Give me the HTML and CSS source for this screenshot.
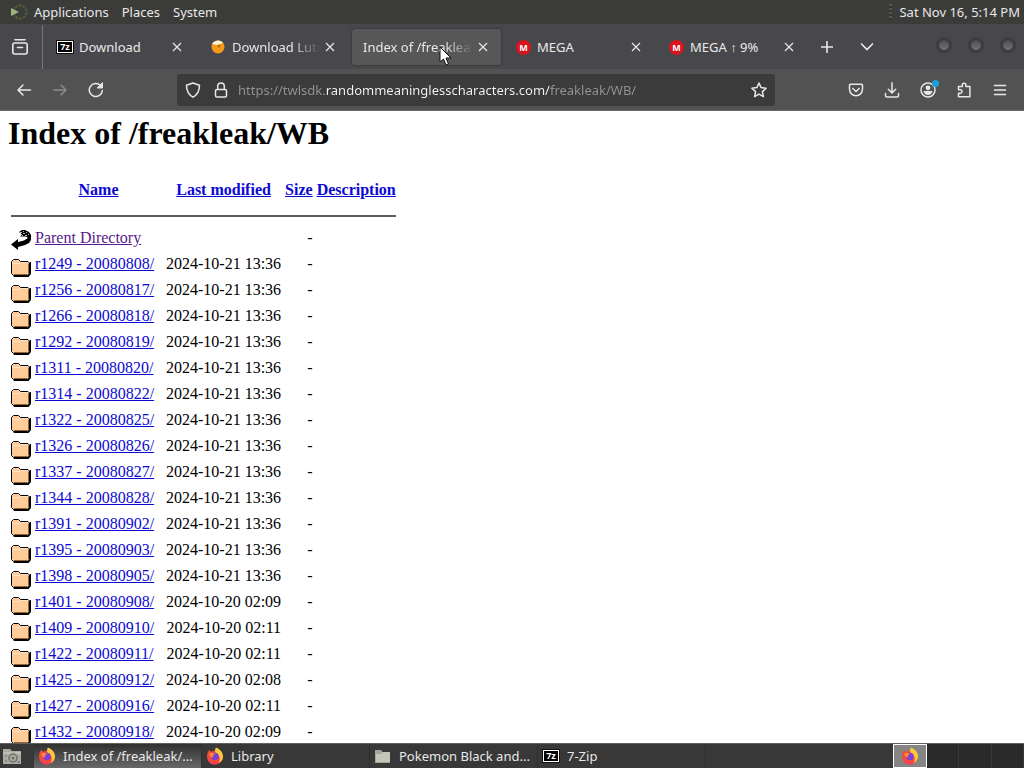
FILE: index.html
```html
<!DOCTYPE html>
<html lang="en">
<head>
  <meta charset="UTF-8">
  <meta name="viewport" content="width=device-width, initial-scale=1.0">
  <title>Index of /freakleak/WB</title>
  <link rel="stylesheet" href="styles.css">
</head>
<body>

  <!-- Shared icons -->
  <svg class="sprite" aria-hidden="true">
    <symbol id="close" viewBox="0 0 10 10"><path d="M1 1l8 8M9 1L1 9" fill="none" stroke="currentColor" stroke-width="1.2"/></symbol>
    <symbol id="firefox" viewBox="0 0 18 18">
      <path d="M1 9.500C1 6 2.600 4 3.500 2.800L5 5c1.500-1 3-1 3.500-.8L10 1c1 2.500 5 2.500 6.600 7.500C18 13 14 17.500 9 17.500S1 14 1 9.500z" fill="#f5493c"/>
      <path d="M10 .5c4 1.500 7 5 7 9 0 3-2 5.500-4 6.500 1.500-4 1-8-3-10-1.500-1.500-1-4 0-5.500z" fill="#ffc93a"/>
      <path d="M2 12c2 4 7 5 11 2.500-1 2-3 3-5 3-3 0-5.500-2.500-6-5.500z" fill="#fb3a63"/>
      <circle cx="9" cy="9.500" r="3.800" fill="#7d3fd8"/>
      <path d="M3.500 6.500C5 5 8 6 9 7.500 7 7.500 6.500 9 7 10.500c-2.500-.5-4-2-3.500-4z" fill="#ff8b35"/>
    </symbol>
    <symbol id="folder" viewBox="0 0 20 22">
      <path d="M2 20.500h14.500l2.500-2.500V7h1v12l-2.500 3H3z" fill="#000"/>
      <path d="M.5 6.500l2-2h5l2 2h7.500l1.500 1.500V18l-2 2.500H2.500l-2-2z" fill="#fc9" stroke="#000"/>
      <path d="M17.500 8.500V18M3 19.500h13.500" fill="none" stroke="#966432"/>
      <path d="M1 8.500h8l1-1h7" fill="none" stroke="#ffe5c8"/>
    </symbol>
    <symbol id="back" viewBox="0 0 20 22">
      <path d="M8 3l3-2h3l4 2 2 3v5l-2 3-4 2-7 2v3l-7-5.500L7 10v3l6-1.500 4-2.500-2-1.500H9l2-2z" fill="#000"/>
      <path d="M9 3.500h2M12 2.500h1M12 4.500h2M15 3.500h1M14 6.500h2M17 5.500h1M11 6.500h1" stroke="#bbb"/>
    </symbol>
  </svg>

  <!-- Top desktop panel -->
  <header class="panel">
    <svg class="menu-logo" width="18" height="18" viewBox="0 0 18 18">
      <circle cx="10" cy="9" r="6.500" fill="none" stroke="#4b5f38" stroke-width="2" stroke-dasharray="3 1"/>
      <path d="M1 5l8 4-8 4z" fill="#9bb47e"/>
    </svg>
    <nav class="panel-menu">
      <button>Applications</button>
      <button>Places</button>
      <button>System</button>
    </nav>
    <span class="grip"></span>
    <time class="clock">Sat Nov 16, 5:14 PM</time>
  </header>

  <!-- Browser tabs -->
  <div class="tab-bar">
    <button class="firefox-view" aria-label="Firefox View">
      <svg width="18" height="18" viewBox="0 0 18 18" fill="none" stroke="currentColor" stroke-width="1.600" stroke-linecap="round">
        <path d="M4 1.800h10"/><rect x="1.800" y="5" width="14.400" height="11" rx="2"/><path d="M6.500 9.500h5"/>
      </svg>
    </button>
    <div class="tabs">
      <div class="tab">
        <span class="zip-icon">7z</span>
        <span class="tab-label">Download</span>
        <button class="tab-close" aria-label="Close tab"><svg width="10" height="10"><use href="#close"/></svg></button>
      </div>
      <div class="tab">
        <svg class="favicon" width="14" height="14" viewBox="0 0 14 14">
          <circle cx="7" cy="7" r="6.500" fill="#f59a1b"/>
          <path d="M1 4C3 0 10-1 12.500 3.500 10 2.500 9 5 6 5 4 5 3 4 1 4z" fill="#fff0d0"/>
          <circle cx="8" cy="6" r="1.500" fill="#c96c08"/>
        </svg>
        <span class="tab-label faded">Download Lutris</span>
        <button class="tab-close" aria-label="Close tab"><svg width="10" height="10"><use href="#close"/></svg></button>
      </div>
      <div class="tab selected">
        <span class="tab-label faded">Index of /freakleak/WB</span>
        <button class="tab-close" aria-label="Close tab"><svg width="10" height="10"><use href="#close"/></svg></button>
        <svg class="pointer" width="13" height="20" viewBox="0 0 13 20">
          <path d="M1 1v15l3.500-3 2.500 6 2.500-1-2.500-6h5z" fill="#fff" stroke="#111"/>
        </svg>
      </div>
      <div class="tab">
        <span class="mega-icon">M</span>
        <span class="tab-label">MEGA</span>
        <button class="tab-close" aria-label="Close tab"><svg width="10" height="10"><use href="#close"/></svg></button>
      </div>
      <div class="tab">
        <span class="mega-icon">M</span>
        <span class="tab-label">MEGA ↑ 9%</span>
        <button class="tab-close" aria-label="Close tab"><svg width="10" height="10"><use href="#close"/></svg></button>
      </div>
    </div>
    <button class="tab-tool" aria-label="New tab">
      <svg width="14" height="14" viewBox="0 0 14 14" fill="none" stroke="currentColor" stroke-width="1.600"><path d="M7 1v12M1 7h12"/></svg>
    </button>
    <button class="tab-tool" aria-label="List all tabs">
      <svg width="14" height="14" viewBox="0 0 14 14" fill="none" stroke="currentColor" stroke-width="1.700" stroke-linecap="round"><path d="M1.500 4L7 9.500 12.500 4"/></svg>
    </button>
    <div class="window-buttons">
      <button aria-label="Minimize"></button>
      <button aria-label="Maximize"></button>
      <button aria-label="Close"></button>
    </div>
  </div>

  <!-- Navigation toolbar -->
  <div class="toolbar">
    <button aria-label="Back">
      <svg width="16" height="16" viewBox="0 0 16 16"><path d="M14.500 8H2M7 3L2 8l5 5"/></svg>
    </button>
    <button aria-label="Forward" disabled>
      <svg width="16" height="16" viewBox="0 0 16 16"><path d="M1.500 8h12.500M9 3l5 5-5 5"/></svg>
    </button>
    <button aria-label="Reload">
      <svg width="16" height="16" viewBox="0 0 16 16"><path d="M14.300 8.500A6.500 6.500 0 1 1 12.500 3.500l1 1"/><path d="M14.500 1v5h-5z" fill="currentColor" stroke-width="1"/></svg>
    </button>
    <div class="url-bar">
      <svg width="16" height="16" viewBox="0 0 16 16"><path d="M8 1l6.500 2.300C14.500 9 12 13 8 15.200 4 13 1.500 9 1.500 3.300z"/></svg>
      <svg width="16" height="16" viewBox="0 0 16 16"><rect x="2.500" y="7.500" width="11" height="7.500" rx="1.500"/><path d="M4.700 7V4.300a3.300 3.300 0 0 1 6.600 0V7"/></svg>
      <input type="text" aria-label="Address" value="https://twlsdk.randommeaninglesscharacters.com/freakleak/WB/">
      <button aria-label="Bookmark this page">
        <svg width="16" height="16" viewBox="0 0 16 16"><path d="M8 1l2.100 4.600 5 .6-3.700 3.400 1 5L8 12.100l-4.400 2.500 1-5L.9 6.200l5-.6z"/></svg>
      </button>
    </div>
    <button aria-label="Save to Pocket">
      <svg width="16" height="16" viewBox="0 0 16 16"><path d="M2.500 2.300h11a1 1 0 0 1 1 1v4a6.500 6.500 0 0 1-13 0v-4a1 1 0 0 1 1-1zM4.800 6.500L8 9.500l3.200-3"/></svg>
    </button>
    <button aria-label="Downloads">
      <svg width="16" height="16" viewBox="0 0 16 16"><path d="M8 .8v10M4.300 7.300L8 11l3.700-3.700M1.500 11.500v2a1.500 1.500 0 0 0 1.500 1.500h10a1.500 1.500 0 0 0 1.500-1.500v-2"/></svg>
    </button>
    <button class="account" aria-label="Account">
      <svg width="16" height="16" viewBox="0 0 16 16"><circle cx="8" cy="8" r="7"/><circle cx="8" cy="5.800" r="2.400" fill="currentColor" stroke="none"/><path d="M3.500 9h9c-.5 2.500-2.300 4-4.500 4s-4-1.500-4.500-4z" fill="currentColor" stroke="none"/></svg>
      <span class="account-dot"></span>
    </button>
    <button aria-label="Extensions">
      <svg width="16" height="16" viewBox="0 0 16 16"><path d="M2.500 14.800v-3.600h1.800a1.700 1.700 0 0 0 0-3.400H2.500V4.500h3.800V3a1.800 1.800 0 0 1 3.600 0v1.500h4v10.300z"/></svg>
    </button>
    <button aria-label="Menu">
      <svg width="14" height="14" viewBox="0 0 14 14"><path d="M1.500 2.500h11M1.500 7h11M1.500 11.500h11"/></svg>
    </button>
  </div>

  <!-- Directory listing -->
  <main class="page">
    <h1>Index of /freakleak/WB</h1>
    <table>
      <thead>
        <tr>
          <th class="icon-col"></th>
          <th class="name-col"><a href="#">Name</a></th>
          <th><a href="#">Last modified</a></th>
          <th><a href="#">Size</a></th>
          <th><a href="#">Description</a></th>
        </tr>
        <tr><th colspan="5"><hr></th></tr>
      </thead>
      <tbody id="listing">
        <tr>
          <td><svg width="20" height="22"><use href="#back"/></svg></td>
          <td><a class="visited" href="#">Parent Directory</a></td>
          <td></td>
          <td class="right">-</td>
          <td></td>
        </tr>
      </tbody>
    </table>
  </main>

  <!-- Bottom desktop panel -->
  <footer class="taskbar">
    <button class="show-files" aria-label="Files">
      <svg width="20" height="18" viewBox="0 0 20 18">
        <path d="M1 2h7l2 2h9v13H1z" fill="#a9aca0"/><path d="M1 6h18" stroke="#d0d2c8"/>
        <circle cx="11" cy="11" r="4" fill="none" stroke="#6d7168" stroke-width="1.500"/><circle cx="11" cy="11" r="1.500" fill="#6d7168"/><path d="M3 9h2M3 14h2M15 15h3" stroke="#6d7168"/>
      </svg>
    </button>
    <div class="tasks">
      <button class="task active"><svg width="18" height="18"><use href="#firefox"/></svg><span>Index of /freakleak/...</span></button>
      <button class="task"><svg width="18" height="18"><use href="#firefox"/></svg><span>Library</span></button>
      <button class="task">
        <svg width="18" height="18" viewBox="0 0 18 18"><path d="M1 3h6l1.500 2H16v11H1z" fill="#a3a698"/><path d="M2 7h5l2-2h7v10H2z" fill="#c4c6ba"/></svg>
        <span>Pokemon Black and...</span>
      </button>
      <button class="task"><span class="zip-icon">7z</span><span>7-Zip</span></button>
    </div>
    <div class="workspaces">
      <button class="current" aria-label="Workspace 1"><svg width="18" height="18"><use href="#firefox"/></svg></button>
      <button aria-label="Workspace 2"></button>
      <button aria-label="Workspace 3"></button>
      <button aria-label="Workspace 4"></button>
    </div>
  </footer>

  <script>
    const folders = [
      ["r1249 - 20080808/", "2024-10-21 13:36"],
      ["r1256 - 20080817/", "2024-10-21 13:36"],
      ["r1266 - 20080818/", "2024-10-21 13:36"],
      ["r1292 - 20080819/", "2024-10-21 13:36"],
      ["r1311 - 20080820/", "2024-10-21 13:36"],
      ["r1314 - 20080822/", "2024-10-21 13:36"],
      ["r1322 - 20080825/", "2024-10-21 13:36"],
      ["r1326 - 20080826/", "2024-10-21 13:36"],
      ["r1337 - 20080827/", "2024-10-21 13:36"],
      ["r1344 - 20080828/", "2024-10-21 13:36"],
      ["r1391 - 20080902/", "2024-10-21 13:36"],
      ["r1395 - 20080903/", "2024-10-21 13:36"],
      ["r1398 - 20080905/", "2024-10-21 13:36"],
      ["r1401 - 20080908/", "2024-10-20 02:09"],
      ["r1409 - 20080910/", "2024-10-20 02:11"],
      ["r1422 - 20080911/", "2024-10-20 02:11"],
      ["r1425 - 20080912/", "2024-10-20 02:08"],
      ["r1427 - 20080916/", "2024-10-20 02:11"],
      ["r1432 - 20080918/", "2024-10-20 02:09"]
    ];

    const listing = document.getElementById("listing");
    folders.forEach(([name, modified]) => {
      const row = document.createElement("tr");
      row.innerHTML = `
        <td><svg width="20" height="22"><use href="#folder"/></svg></td>
        <td><a href="#">${name}</a></td>
        <td class="right">${modified}</td>
        <td class="right">-</td>
        <td></td>`;
      listing.appendChild(row);
    });
  </script>

</body>
</html>
```
FILE: styles.css
```css
* {
  box-sizing: border-box;
}

body {
  display: flex;
  flex-direction: column;
  height: 100vh;
  margin: 0;
  overflow: hidden;
  background-color: #fff;
  font-family: "Noto Sans", sans-serif;
  font-size: 13px;
  color: #e8e8e8;
}

button {
  display: flex;
  align-items: center;
  justify-content: center;
  padding: 0;
  border: none;
  background: none;
  color: inherit;
  font: inherit;
}

.sprite {
  position: absolute;
  width: 0;
  height: 0;
}

/* Top panel */
.panel {
  display: flex;
  align-items: center;
  flex: none;
  height: 24px;
  padding: 0 4px 0 10px;
  background-color: #3b3b3a;
}

.panel-menu {
  display: flex;
  gap: 13px;
  margin-left: 6px;
}

.grip {
  width: 3px;
  height: 16px;
  margin-left: auto;
  background: repeating-linear-gradient(#555 0 2px, #333 2px 4px);
}

.clock {
  margin-left: 7px;
}

/* Tabs */
.tab-bar {
  display: flex;
  align-items: center;
  flex: none;
  height: 45px;
  padding-top: 1px;
  background-color: #48484c;
}

.firefox-view {
  align-self: stretch;
  width: 43px;
  padding-right: 2px;
  border-right: 1px solid #77777a;
}

.tabs {
  display: flex;
  flex: 0 1 761px;
  gap: 4px;
  margin-left: 3px;
}

.tab {
  position: relative;
  display: flex;
  align-items: center;
  flex: 1;
  min-width: 0;
  height: 36px;
  padding: 0 8px 0 11px;
  gap: 6px;
  border-radius: 3px;
}

.tab.selected {
  background-color: #575757;
  box-shadow: 0 0 2px rgba(0, 0, 0, 0.5);
}

.tab-label {
  flex: 1;
  min-width: 0;
  overflow: hidden;
  white-space: nowrap;
}

.tab-label.faded {
  margin-right: -6px;
  -webkit-mask-image: linear-gradient(to left, transparent, #000 28px);
  mask-image: linear-gradient(to left, transparent, #000 28px);
}

.tab-close {
  flex: none;
  width: 20px;
  height: 20px;
}

.favicon {
  flex: none;
  margin: 0 1px;
}

.zip-icon {
  flex: none;
  width: 16px;
  height: 12px;
  border: 1px solid #fff;
  outline: 1px solid #111;
  background-color: #000;
  color: #fff;
  font-size: 9px;
  font-weight: bold;
  line-height: 10px;
  text-align: center;
}

.mega-icon {
  flex: none;
  width: 15px;
  height: 15px;
  border-radius: 50%;
  background-color: #d9141e;
  color: #fff;
  font-size: 9px;
  font-weight: bold;
  line-height: 15px;
  text-align: center;
}

.pointer {
  position: absolute;
  top: 17px;
  left: 87px;
}

.tab-tool {
  width: 40px;
  height: 36px;
}

.window-buttons {
  display: flex;
  gap: 16px;
  margin-left: auto;
  padding: 0 8px 4px 0;
}

.window-buttons button {
  width: 16px;
  height: 16px;
  border: 3px solid #3c3c3e;
  border-radius: 50%;
  background: linear-gradient(#4b4b4d, #737375);
}

/* Toolbar */
.toolbar {
  display: flex;
  align-items: center;
  flex: none;
  height: 42px;
  padding: 0 6px;
  border-bottom: 1px solid #68686a;
  background-color: #525252;
}

.toolbar svg {
  flex: none;
  fill: none;
  stroke: currentColor;
  stroke-width: 1.5;
  stroke-linecap: round;
  stroke-linejoin: round;
}

.toolbar button {
  flex: none;
  width: 36px;
  height: 32px;
}

.toolbar button:disabled {
  color: #8c8c8c;
}

.url-bar {
  display: flex;
  align-items: center;
  flex: 1;
  height: 32px;
  margin: 0 63px;
  padding-left: 8px;
  gap: 12px;
  border-radius: 3px;
  background-color: #3b3b3b;
}

.url-bar input {
  flex: 1;
  min-width: 0;
  height: 24px;
  margin-left: -3px;
  padding: 0;
  border: none;
  outline: none;
  /* dim the scheme and the path, keep the domain bright */
  background: linear-gradient(to right, #939393 88px, #f5f5f5 88px 312px, #939393 312px);
  -webkit-background-clip: text;
  background-clip: text;
  -webkit-text-fill-color: transparent;
  color: #939393;
  font: inherit;
}

.url-bar button {
  width: 32px;
}

.account {
  position: relative;
}

.account-dot {
  position: absolute;
  top: 6px;
  right: 7px;
  width: 7px;
  height: 7px;
  border-radius: 50%;
  background-color: #1b9fdc;
}

/* Listing */
.page {
  flex: 1;
  min-height: 0;
  padding: 4px 8px 0;
  overflow: hidden;
  background-color: #fff;
  color: #000;
  font-family: "Liberation Serif", serif;
  font-size: 16px;
  line-height: 18px;
}

h1 {
  margin: 0 0 27px;
  font-size: 32px;
  line-height: 36px;
}

table {
  border-collapse: separate;
  border-spacing: 2px;
}

th,
td {
  padding: 1px;
  vertical-align: top;
  white-space: nowrap;
}

thead tr:first-child th,
td {
  height: 24px;
}

.icon-col {
  width: 22px;
}

.name-col {
  width: 129px;
}

td svg {
  display: block;
}

.right {
  text-align: right;
}

hr {
  height: 2px;
  margin: 8px 0;
  border: none;
  background-color: #5c5c5c;
}

a {
  color: #0c08d4;
}

a.visited {
  color: #551a8b;
}

/* Bottom panel */
.taskbar {
  display: flex;
  align-items: center;
  flex: none;
  height: 25px;
  border-top: 1px solid #606060;
  background-color: #383838;
}

.show-files {
  width: 24px;
  height: 24px;
}

.tasks {
  display: flex;
  flex: 1;
  margin-left: 10px;
}

.task {
  justify-content: flex-start;
  flex: 0 1 168px;
  min-width: 0;
  height: 24px;
  padding: 0 4px;
  gap: 7px;
  border-right: 1px solid #303030;
  white-space: nowrap;
}

.task .zip-icon {
  margin: 0 1px;
}

.task.active {
  background: linear-gradient(#303030, #686868);
}

.workspaces {
  display: flex;
  width: 131px;
  height: 24px;
  background-color: #2a2a2a;
}

.workspaces button {
  flex: 1;
  border-right: 1px solid #3a3a3a;
}

.workspaces .current {
  border: 1px solid #fff;
  background-color: #858585;
}
```
